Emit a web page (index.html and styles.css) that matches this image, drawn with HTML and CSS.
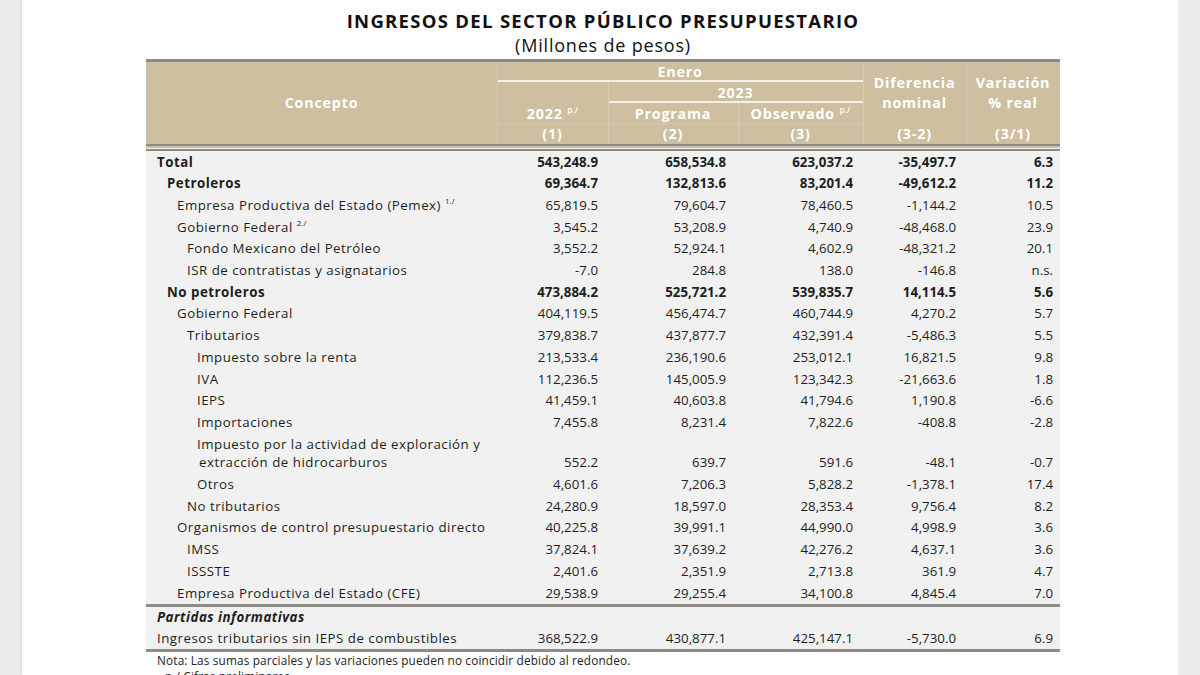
FILE: index.html
```html
<!DOCTYPE html>
<html lang="es">
<head>
<meta charset="utf-8">
<title>Ingresos del sector público presupuestario</title>
<link rel="stylesheet" href="styles.css">
</head>
<body>
<div class="page">
  <div class="side"></div>
  <main class="sheet">
    <div class="content">
      <h1 class="title">INGRESOS DEL SECTOR PÚBLICO PRESUPUESTARIO</h1>
      <p class="subtitle">(Millones de pesos)</p>
      <table class="data">
        <colgroup>
          <col class="w-concept"><col class="w-c1"><col class="w-c2"><col class="w-c3"><col class="w-c4"><col class="w-c5">
        </colgroup>
        <thead>
          <tr>
            <th rowspan="4" class="h-concept">Concepto</th>
            <th colspan="3" class="rule vl">Enero</th>
            <th rowspan="3" class="vl">Diferencia<br>nominal</th>
            <th rowspan="3" class="vl">Variación<br>% real</th>
          </tr>
          <tr>
            <th class="vl"></th>
            <th colspan="2" class="rule vl">2023</th>
          </tr>
          <tr class="r3">
            <th class="vl">2022 <sup>p./</sup></th>
            <th class="vl">Programa</th>
            <th class="vl">Observado <sup>p./</sup></th>
          </tr>
          <tr class="r4">
            <th class="vl">(1)</th>
            <th class="vl">(2)</th>
            <th class="vl">(3)</th>
            <th class="vl">(3-2)</th>
            <th class="vl">(3/1)</th>
          </tr>
        </thead>
        <tbody class="main">
          <tr class="b"><td class="l0">Total</td><td class="n1">543,248.9</td><td class="n2">658,534.8</td><td class="n3">623,037.2</td><td class="n4">-35,497.7</td><td class="n5">6.3</td></tr>
          <tr class="b"><td class="l1">Petroleros</td><td class="n1">69,364.7</td><td class="n2">132,813.6</td><td class="n3">83,201.4</td><td class="n4">-49,612.2</td><td class="n5">11.2</td></tr>
          <tr><td class="l2">Empresa Productiva del Estado (Pemex) <sup>1./</sup></td><td class="n1">65,819.5</td><td class="n2">79,604.7</td><td class="n3">78,460.5</td><td class="n4">-1,144.2</td><td class="n5">10.5</td></tr>
          <tr><td class="l2">Gobierno Federal <sup>2./</sup></td><td class="n1">3,545.2</td><td class="n2">53,208.9</td><td class="n3">4,740.9</td><td class="n4">-48,468.0</td><td class="n5">23.9</td></tr>
          <tr><td class="l3">Fondo Mexicano del Petróleo</td><td class="n1">3,552.2</td><td class="n2">52,924.1</td><td class="n3">4,602.9</td><td class="n4">-48,321.2</td><td class="n5">20.1</td></tr>
          <tr><td class="l3">ISR de contratistas y asignatarios</td><td class="n1">-7.0</td><td class="n2">284.8</td><td class="n3">138.0</td><td class="n4">-146.8</td><td class="n5">n.s.</td></tr>
          <tr class="b"><td class="l1">No petroleros</td><td class="n1">473,884.2</td><td class="n2">525,721.2</td><td class="n3">539,835.7</td><td class="n4">14,114.5</td><td class="n5">5.6</td></tr>
          <tr><td class="l2">Gobierno Federal</td><td class="n1">404,119.5</td><td class="n2">456,474.7</td><td class="n3">460,744.9</td><td class="n4">4,270.2</td><td class="n5">5.7</td></tr>
          <tr><td class="l3">Tributarios</td><td class="n1">379,838.7</td><td class="n2">437,877.7</td><td class="n3">432,391.4</td><td class="n4">-5,486.3</td><td class="n5">5.5</td></tr>
          <tr><td class="l4">Impuesto sobre la renta</td><td class="n1">213,533.4</td><td class="n2">236,190.6</td><td class="n3">253,012.1</td><td class="n4">16,821.5</td><td class="n5">9.8</td></tr>
          <tr><td class="l4">IVA</td><td class="n1">112,236.5</td><td class="n2">145,005.9</td><td class="n3">123,342.3</td><td class="n4">-21,663.6</td><td class="n5">1.8</td></tr>
          <tr><td class="l4">IEPS</td><td class="n1">41,459.1</td><td class="n2">40,603.8</td><td class="n3">41,794.6</td><td class="n4">1,190.8</td><td class="n5">-6.6</td></tr>
          <tr><td class="l4">Importaciones</td><td class="n1">7,455.8</td><td class="n2">8,231.4</td><td class="n3">7,822.6</td><td class="n4">-408.8</td><td class="n5">-2.8</td></tr>
          <tr class="two"><td class="l4">Impuesto por la actividad de exploración y<br><span class="cont">extracción de hidrocarburos</span></td><td class="n1">552.2</td><td class="n2">639.7</td><td class="n3">591.6</td><td class="n4">-48.1</td><td class="n5">-0.7</td></tr>
          <tr><td class="l4">Otros</td><td class="n1">4,601.6</td><td class="n2">7,206.3</td><td class="n3">5,828.2</td><td class="n4">-1,378.1</td><td class="n5">17.4</td></tr>
          <tr><td class="l3">No tributarios</td><td class="n1">24,280.9</td><td class="n2">18,597.0</td><td class="n3">28,353.4</td><td class="n4">9,756.4</td><td class="n5">8.2</td></tr>
          <tr><td class="l2">Organismos de control presupuestario directo</td><td class="n1">40,225.8</td><td class="n2">39,991.1</td><td class="n3">44,990.0</td><td class="n4">4,998.9</td><td class="n5">3.6</td></tr>
          <tr><td class="l3">IMSS</td><td class="n1">37,824.1</td><td class="n2">37,639.2</td><td class="n3">42,276.2</td><td class="n4">4,637.1</td><td class="n5">3.6</td></tr>
          <tr><td class="l3">ISSSTE</td><td class="n1">2,401.6</td><td class="n2">2,351.9</td><td class="n3">2,713.8</td><td class="n4">361.9</td><td class="n5">4.7</td></tr>
          <tr><td class="l2">Empresa Productiva del Estado (CFE)</td><td class="n1">29,538.9</td><td class="n2">29,255.4</td><td class="n3">34,100.8</td><td class="n4">4,845.4</td><td class="n5">7.0</td></tr>
        </tbody>
        <tbody class="info">
          <tr><td class="l0 bi">Partidas informativas</td><td></td><td></td><td></td><td></td><td></td></tr>
          <tr><td class="l0">Ingresos tributarios sin IEPS de combustibles</td><td class="n1">368,522.9</td><td class="n2">430,877.1</td><td class="n3">425,147.1</td><td class="n4">-5,730.0</td><td class="n5">6.9</td></tr>
        </tbody>
      </table>
      <div class="notes">
        <p>Nota: Las sumas parciales y las variaciones pueden no coincidir debido al redondeo.</p>
        <p class="ind">p./ Cifras preliminares.</p>
      </div>
    </div>
  </main>
  <div class="side"></div>
</div>
</body>
</html>
```
FILE: styles.css
```css
* { box-sizing: border-box; }
html, body { margin: 0; padding: 0; }
body {
  font-family: "Open Sans", "Noto Sans", sans-serif;
  color: #1e1e1e;
  background: #ececef;
  width: 1200px;
  height: 675px;
  overflow: hidden;
}
.page {
  display: flex;
  height: 675px;
}
.side {
  width: 22px;
  flex: none;
  background: #ececef;
}
.sheet {
  flex: 1;
  background: #ffffff;
  box-shadow: 0 0 3px rgba(0, 0, 0, 0.18);
  overflow: hidden;
}
.content {
  width: 914px;
  margin-left: 124px;
  padding-top: 9px;
}
.title {
  margin: 0;
  text-align: center;
  font-size: 18.5px;
  line-height: 24px;
  font-weight: 700;
  letter-spacing: 1.3px;
  color: #111;
}
.subtitle {
  margin: 0;
  text-align: center;
  font-size: 18px;
  line-height: 24px;
  font-weight: 400;
  letter-spacing: 0.8px;
  color: #111;
  height: 26px;
}
.data {
  width: 914px;
  border-collapse: collapse;
  table-layout: fixed;
  font-size: 13.3px;
}
.w-concept { width: 351px; }
.w-c1 { width: 111px; }
.w-c2 { width: 130px; }
.w-c3 { width: 125px; }
.w-c4 { width: 103px; }
.w-c5 { width: 94px; }

.data thead {
  border-top: 3px solid #8c8b86;
  border-bottom: 7px double #8c8b86;
}
.data th {
  background: #cdbf9f;
  color: #ffffff;
  font-weight: 700;
  font-size: 14.3px;
  letter-spacing: 0.8px;
  line-height: 20px;
  height: 21px;
  padding: 0;
  text-align: center;
  vertical-align: middle;
}
.data th.vl { box-shadow: inset 1px 0 0 #d6ccb3; }
.data th.rule.vl { box-shadow: inset 1px 0 0 #d6ccb3, inset 0 -2px 0 #f3efe5; }
.data tr.r3 th.vl { box-shadow: inset 1px 0 0 #d6ccb3, inset 0 -1px 0 #d3c8ad; }
.data th sup {
  font-size: 8.5px;
  font-weight: 600;
  letter-spacing: 0;
  vertical-align: 6px;
  line-height: 0;
}

.data td {
  background: #f1f1f1;
  padding: 1.5px 0;
  line-height: 18.7px;
  white-space: nowrap;
  vertical-align: middle;
}
.data td:first-child { letter-spacing: 0.5px; }
.data tr.b td { font-weight: 700; }
.data tr.two td { vertical-align: bottom; }
.data tr.two td.l4 { white-space: normal; }
.cont { padding-left: 2px; }
.data td sup {
  font-size: 8px;
  letter-spacing: 0;
  vertical-align: 6px;
  line-height: 0;
}
.l0 { padding-left: 11px !important; }
.l1 { padding-left: 21px !important; }
.l2 { padding-left: 31px !important; }
.l3 { padding-left: 41px !important; }
.l4 { padding-left: 51px !important; }
.n1, .n2, .n3, .n4, .n5 { text-align: right; }
.n1 { padding-right: 10px !important; }
.n2 { padding-right: 12px !important; }
.n3 { padding-right: 10px !important; }
.n4 { padding-right: 10px !important; }
.n5 { padding-right: 7px !important; }
.data tbody.main { border-bottom: 3px solid #8c8b86; }
.data tbody.info { border-bottom: 3px solid #8c8b86; }
.data tbody.info td { padding: 1.2px 0; }
.bi { font-weight: 700; font-style: italic; }

.notes {
  padding-left: 11px;
  font-size: 11.8px;
  letter-spacing: 0.15px;
  line-height: 16px;
  color: #222;
  padding-top: 0;
}
.notes p { margin: 0; }
.notes .ind { padding-left: 8px; }
```
